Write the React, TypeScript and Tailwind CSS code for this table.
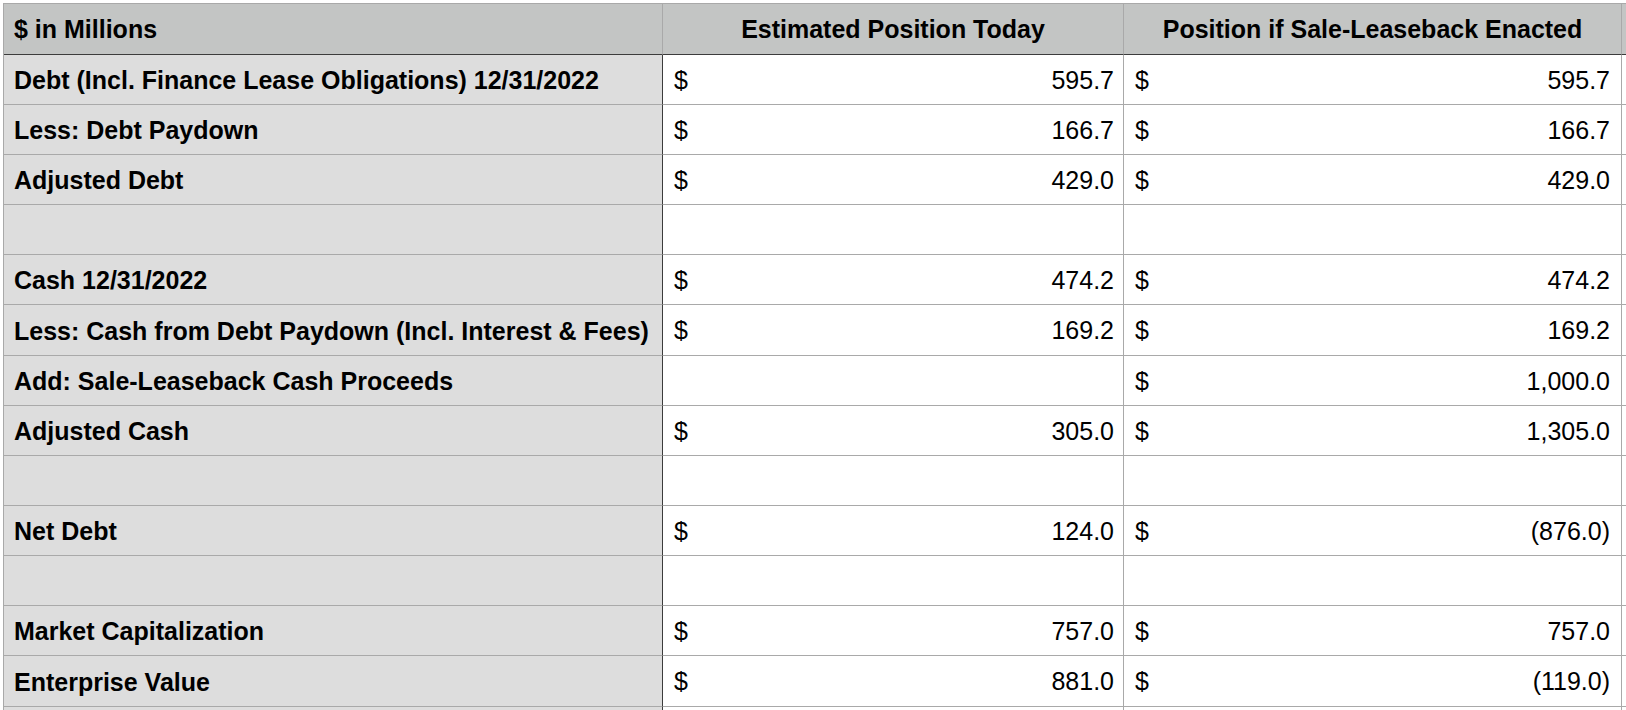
import React from "react";

type Row = {
  label: string;
  today?: string;
  sale?: string;
  tall?: boolean;
};

const rows: Row[] = [
  { label: "Debt (Incl. Finance Lease Obligations) 12/31/2022", today: "595.7", sale: "595.7" },
  { label: "Less: Debt Paydown", today: "166.7", sale: "166.7" },
  { label: "Adjusted Debt", today: "429.0", sale: "429.0" },
  { label: "" },
  { label: "Cash 12/31/2022", today: "474.2", sale: "474.2" },
  { label: "Less: Cash from Debt Paydown (Incl. Interest & Fees)", today: "169.2", sale: "169.2", tall: true },
  { label: "Add: Sale-Leaseback Cash Proceeds", sale: "1,000.0" },
  { label: "Adjusted Cash", today: "305.0", sale: "1,305.0" },
  { label: "" },
  { label: "Net Debt", today: "124.0", sale: "(876.0)" },
  { label: "" },
  { label: "Market Capitalization", today: "757.0", sale: "757.0" },
  { label: "Enterprise Value", today: "881.0", sale: "(119.0)", tall: true },
  { label: "" },
];

function Money({ value, pr }: { value?: string; pr: string }) {
  if (!value) return null;
  return (
    <div className={`flex h-full items-center justify-between pl-[11px] pt-[2px] ${pr}`}>
      <span>$</span>
      <span>{value}</span>
    </div>
  );
}

export default function App() {
  return (
    <div
      className="h-[710px] w-[1626px] overflow-hidden bg-white text-[25px] text-black"
      style={{ fontFamily: '"Liberation Sans", Arial, Helvetica, sans-serif' }}
    >
      <div className="ml-[3px] mt-[3px] grid w-max grid-cols-[659px_461px_498px_300px] border-l border-t border-[#a9a9a9]">
        {/* header */}
        <div className="flex h-[51px] items-center border-b border-r border-b-[#3c3c3c] border-r-[#a9a9a9] bg-[#c3c5c4] pl-[10px] pt-[2px] font-bold">
          $ in Millions
        </div>
        <div className="flex h-[51px] items-center justify-center border-b border-r border-b-[#3c3c3c] border-r-[#a9a9a9] bg-[#c3c5c4] pt-[2px] font-bold">
          Estimated Position Today
        </div>
        <div className="flex h-[51px] items-center justify-center border-b border-r border-b-[#3c3c3c] border-r-[#a9a9a9] bg-[#c3c5c4] pt-[2px] font-bold">
          Position if Sale-Leaseback Enacted
        </div>
        <div className="h-[51px] border-b border-r border-b-[#3c3c3c] border-r-[#a9a9a9] bg-[#c3c5c4]" />

        {rows.map((r, i) => (
          <React.Fragment key={i}>
            <div
              className={`flex items-center border-b border-r border-b-[#a9a9a9] border-r-[#3c3c3c] bg-[#dddddd] pl-[10px] pt-[3px] font-bold ${
                r.tall ? "h-[51px]" : "h-[50px]"
              }`}
            >
              {r.label}
            </div>
            <div className={`border-b border-r border-[#a9a9a9] ${r.tall ? "h-[51px]" : "h-[50px]"}`}>
              <Money value={r.today} pr="pr-[9px]" />
            </div>
            <div className={`border-b border-r border-[#a9a9a9] ${r.tall ? "h-[51px]" : "h-[50px]"}`}>
              <Money value={r.sale} pr="pr-[11px]" />
            </div>
            <div className={`border-b border-r border-[#a9a9a9] ${r.tall ? "h-[51px]" : "h-[50px]"}`} />
          </React.Fragment>
        ))}
      </div>
    </div>
  );
}
